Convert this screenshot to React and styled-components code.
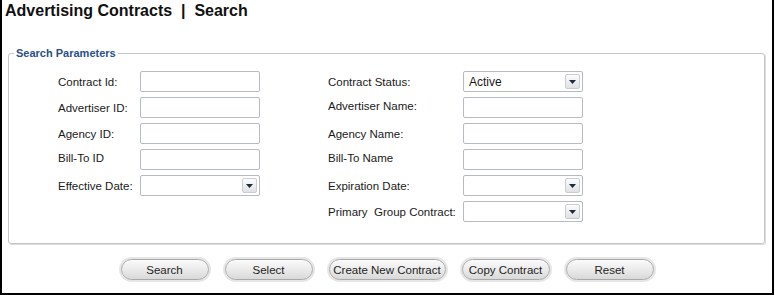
import React from 'react'
import styled, { createGlobalStyle } from 'styled-components'

const GlobalStyle = createGlobalStyle`
  html, body {
    margin: 0;
    padding: 0;
    background: #ffffff;
  }
  * {
    box-sizing: border-box;
  }
`

// frame
const Frame = styled.div`
  width: 774px;
  height: 295px;
  border: 2px solid #000;
  border-top: none;
  font-family: 'Liberation Sans', Arial, sans-serif;
  color: #1a1a1a;
  display: flex;
  flex-direction: column;
`

const Title = styled.h1`
  margin: 0;
  padding: 2px 0 0 3px;
  height: 22px;
  font-size: 16px;
  line-height: 18px;
  font-weight: bold;
  color: #111;
  white-space: pre;
`

// search parameters box
const ParamBox = styled.fieldset`
  margin: 25px 7px 0 6px;
  padding: 0;
  border: 1px solid #c3c7cc;
  border-radius: 3px;
  box-shadow: 1px 1px 0 #dcdcdc;
`

const Legend = styled.legend`
  margin-left: 5px;
  padding: 0 2px;
  font-size: 11px;
  line-height: 13px;
  font-weight: bold;
  color: #2b5088;
`

const ParamBody = styled.div`
  display: flex;
  gap: 68px;
  padding: 11px 0 21px 49px;
`

const Column = styled.div`
  display: grid;
  grid-template-columns: ${props => props.labelWidth}px 120px;
  grid-auto-rows: 21px;
  row-gap: 5px;
  align-items: center;
  align-content: start;
`

const Label = styled.label`
  font-size: 11.5px;
  line-height: 14px;
  white-space: pre;
  margin-top: ${props => (props.raised ? -4 : 0)}px;
`

const TextBox = styled.div`
  width: 120px;
  height: 21px;
  border: 1px solid #b6bbc1;
  border-radius: 2px;
  background: #fff;
`

const SelectBox = styled.div`
  width: 120px;
  height: 21px;
  border: 1px solid #b6bbc1;
  border-radius: 2px;
  background: #fff;
  display: flex;
  align-items: center;
  justify-content: space-between;
  padding: 0 2px 0 5px;
  font-size: 12px;
`

const ArrowButton = styled.span`
  width: 15px;
  height: 15px;
  border: 1px solid #c9cdd2;
  border-radius: 2px;
  background: linear-gradient(#fdfdfd, #dfe1e4);
  display: flex;
  align-items: center;
  justify-content: center;
`

// buttons
const ButtonRow = styled.div`
  margin-top: 15px;
  display: flex;
  justify-content: center;
  gap: 16px;
`

const Pill = styled.button`
  width: ${props => props.width || 88}px;
  height: 21px;
  padding: 0;
  border: 1px solid #a9a9a9;
  border-radius: 11px;
  box-shadow: 0 0 0 2px #e6e6e6;
  background: linear-gradient(#fbfbfb, #e9e9e9 55%, #d9d9d9);
  font-family: 'Liberation Sans', Arial, sans-serif;
  font-size: 11.5px;
  color: #1e1e1e;
  white-space: nowrap;
  overflow: hidden;
`

const Select = ({ value }) => (
  <SelectBox>
    <span>{value}</span>
    <ArrowButton>
      <svg width='7' height='4' viewBox='0 0 7 4'>
        <path d='M0 0h7L3.5 4z' fill='#1c2b3d' />
      </svg>
    </ArrowButton>
  </SelectBox>
)

const leftFields = [
  { label: 'Contract Id:' },
  { label: 'Advertiser ID:' },
  { label: 'Agency ID:' },
  { label: 'Bill-To ID', raised: true },
  { label: 'Effective Date:', select: true }
]

const rightFields = [
  { label: 'Contract Status:', select: true, value: 'Active' },
  { label: 'Advertiser Name:', raised: true },
  { label: 'Agency Name:' },
  { label: 'Bill-To Name', raised: true },
  { label: 'Expiration Date:', select: true },
  { label: 'Primary  Group Contract:', select: true }
]

const renderFields = fields =>
  fields.map(f => (
    <React.Fragment key={f.label}>
      <Label raised={f.raised}>{f.label}</Label>
      {f.select ? <Select value={f.value} /> : <TextBox />}
    </React.Fragment>
  ))

export default function App() {
  return (
    <Frame>
      <GlobalStyle />
      <Title>{'Advertising Contracts  |  Search'}</Title>
      <ParamBox>
        <Legend>Search Parameters</Legend>
        <ParamBody>
          <Column labelWidth={82}>{renderFields(leftFields)}</Column>
          <Column labelWidth={135}>{renderFields(rightFields)}</Column>
        </ParamBody>
      </ParamBox>
      <ButtonRow>
        <Pill>Search</Pill>
        <Pill>Select</Pill>
        <Pill width={117}>Create New Contract</Pill>
        <Pill>Copy Contract</Pill>
        <Pill>Reset</Pill>
      </ButtonRow>
    </Frame>
  )
}
